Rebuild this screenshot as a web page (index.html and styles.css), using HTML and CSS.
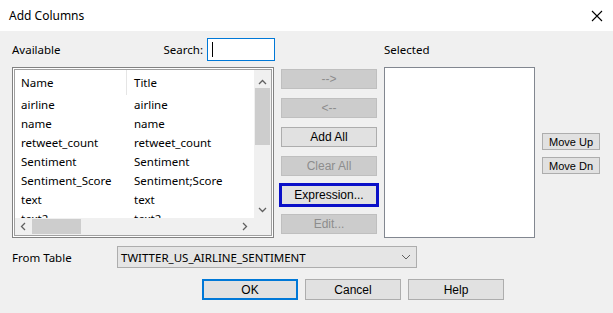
FILE: index.html
```html
<!DOCTYPE html>
<html lang="en">
<head>
  <meta charset="UTF-8">
  <title>Add Columns</title>
  <link rel="stylesheet" href="styles.css">
</head>
<body>
  <div class="dialog">
    <!-- Title Bar -->
    <div class="titlebar">
      <span class="title">Add Columns</span>
      <svg class="close" width="12" height="12" viewBox="0 0 12 12">
        <path d="M1 1 L11 11 M11 1 L1 11" stroke="#000" stroke-width="1.1" fill="none"/>
      </svg>
    </div>

    <div class="content">
      <div class="row labels">
        <div class="available-head">
          <span class="label">Available</span>
          <div class="search">
            <span class="label">Search:</span>
            <div class="search-box"><span class="caret"></span></div>
          </div>
        </div>
        <span class="label selected-label">Selected</span>
      </div>

      <div class="row lists">
        <!-- Available columns -->
        <div class="listbox">
          <div class="listbox-inner">
            <div class="grid-view">
              <div class="grid-row header">
                <span class="cell name">Name</span>
                <span class="cell title-col">Title</span>
              </div>
              <div class="grid-row"><span class="cell name">airline</span><span class="cell title-col">airline</span></div>
              <div class="grid-row"><span class="cell name">name</span><span class="cell title-col">name</span></div>
              <div class="grid-row"><span class="cell name">retweet_count</span><span class="cell title-col">retweet_count</span></div>
              <div class="grid-row"><span class="cell name">Sentiment</span><span class="cell title-col">Sentiment</span></div>
              <div class="grid-row"><span class="cell name">Sentiment_Score</span><span class="cell title-col">Sentiment;Score</span></div>
              <div class="grid-row"><span class="cell name">text</span><span class="cell title-col">text</span></div>
              <div class="grid-row"><span class="cell name">text2</span><span class="cell title-col">text2</span></div>
            </div>
            <div class="vscroll">
              <svg width="9" height="6" viewBox="0 0 9 6"><path d="M1 5 L4.5 1.5 L8 5" stroke="#606060" stroke-width="1.3" fill="none"/></svg>
              <div class="vthumb"></div>
              <svg class="down" width="9" height="6" viewBox="0 0 9 6"><path d="M1 1 L4.5 4.5 L8 1" stroke="#606060" stroke-width="1.3" fill="none"/></svg>
            </div>
            <div class="hscroll">
              <svg width="6" height="9" viewBox="0 0 6 9"><path d="M5 1 L1.5 4.5 L5 8" stroke="#606060" stroke-width="1.3" fill="none"/></svg>
              <div class="hthumb"></div>
              <svg class="right" width="6" height="9" viewBox="0 0 6 9"><path d="M1 1 L4.5 4.5 L1 8" stroke="#606060" stroke-width="1.3" fill="none"/></svg>
            </div>
            <div class="corner"></div>
          </div>
        </div>

        <!-- Transfer buttons -->
        <div class="transfer">
          <button class="btn disabled">--&gt;</button>
          <button class="btn disabled">&lt;--</button>
          <button class="btn">Add All</button>
          <button class="btn disabled">Clear All</button>
          <button class="btn focused">Expression...</button>
          <button class="btn disabled">Edit...</button>
        </div>

        <!-- Selected columns -->
        <div class="selected-box"></div>

        <div class="order">
          <button class="btn small">Move Up</button>
          <button class="btn small">Move Dn</button>
        </div>
      </div>

      <div class="row from">
        <span class="label from-label">From Table</span>
        <div class="combo">
          <span class="combo-text">TWITTER_US_AIRLINE_SENTIMENT</span>
          <svg width="10" height="6" viewBox="0 0 10 6"><path d="M1 1 L5 5 L9 1" stroke="#606060" stroke-width="1" fill="none"/></svg>
        </div>
      </div>

      <div class="row actions">
        <button class="btn default">OK</button>
        <button class="btn">Cancel</button>
        <button class="btn">Help</button>
      </div>
    </div>
  </div>
</body>
</html>
```

FILE: styles.css
```css
* {
  margin: 0;
  padding: 0;
  box-sizing: border-box;
}

body {
  background: #f0f0f0;
  width: 613px;
  height: 313px;
  overflow: hidden;
  font-family: 'Noto Sans', 'Open Sans', sans-serif;
  font-size: 11.5px;
  color: #000;
}

.dialog {
  width: 613px;
  height: 313px;
}

/* Title Bar */
.titlebar {
  height: 31px;
  background: #ffffff;
  display: flex;
  align-items: center;
  justify-content: space-between;
  padding: 0 10px 0 9px;
}

.title {
  font-size: 12px;
}

.close {
  display: block;
}

.content {
  padding: 7px 0 0 12px;
}

.row {
  display: flex;
}

.label {
  white-space: nowrap;
}

/* Labels row */
.labels {
  height: 23px;
  align-items: center;
}

.available-head {
  width: 263px;
  display: flex;
  justify-content: space-between;
  align-items: center;
}

.search {
  display: flex;
  align-items: center;
  gap: 4px;
}

.search-box {
  width: 68px;
  height: 23px;
  background: #fff;
  border: 1px solid #0078d7;
  padding: 3px 0 0 4px;
}

.caret {
  display: block;
  width: 1px;
  height: 15px;
  background: #000;
}

.selected-label {
  margin-left: 109px;
}

/* Lists row */
.lists {
  margin-top: 6px;
  align-items: flex-start;
}

.listbox {
  width: 262px;
  height: 171px;
  border: 1px solid #828282;
  padding: 1px;
  background: #fff;
}

.listbox-inner {
  height: 100%;
  border: 1px solid #a0a0a0;
  display: grid;
  grid-template-columns: 1fr 17px;
  grid-template-rows: 1fr 17px;
  overflow: hidden;
}

.grid-view {
  overflow: hidden;
  background: #fff;
}

.grid-row {
  display: flex;
  height: 19px;
  align-items: center;
  white-space: nowrap;
}

.grid-row.header {
  height: 25px;
}

.cell.name {
  width: 112px;
  padding-left: 6px;
}

.cell.title-col {
  padding-left: 7px;
}

.header .cell.name {
  border-right: 1px solid #e5e5e5;
  height: 100%;
  display: flex;
  align-items: center;
}

.vscroll {
  background: #f0f0f0;
  display: flex;
  flex-direction: column;
  align-items: center;
  padding-top: 9px;
}

.vthumb {
  width: 15px;
  height: 57px;
  background: #cdcdcd;
  margin-top: 3px;
}

.vscroll .down {
  margin-top: auto;
  margin-bottom: 5px;
}

.hscroll {
  background: #f0f0f0;
  display: flex;
  align-items: center;
  padding-left: 5px;
}

.hthumb {
  width: 49px;
  height: 15px;
  background: #cdcdcd;
  margin-left: 6px;
}

.hscroll .right {
  margin-left: auto;
  margin-right: 6px;
}

.corner {
  background: #f0f0f0;
}

/* Buttons */
.btn {
  font-family: 'Liberation Sans', Arial, sans-serif;
  font-size: 12px;
  color: #000;
  background: #e1e1e1;
  border: 1px solid #adadad;
  height: 20px;
  width: 96px;
  display: flex;
  align-items: center;
  justify-content: center;
}

.btn.disabled {
  background: #cccccc;
  border-color: #bfbfbf;
  color: #8d8d8d;
}

.btn.focused {
  border-color: #0a10c8;
  box-shadow: 0 0 0 2px #0a10c8;
}

.transfer {
  margin-left: 7px;
  margin-top: 2px;
  display: flex;
  flex-direction: column;
  gap: 9px;
}

.selected-box {
  margin-left: 7px;
  width: 151px;
  height: 171px;
  background: #fff;
  border: 1px solid #828790;
}

.order {
  margin-left: 7px;
  margin-top: 66px;
  display: flex;
  flex-direction: column;
  gap: 7px;
}

.btn.small {
  width: 58px;
  height: 17px;
  font-size: 11px;
}

/* From table */
.from {
  margin-top: 8px;
  align-items: center;
}

.from-label {
  width: 105px;
}

.combo {
  width: 300px;
  height: 22px;
  background: #e5e5e5;
  border: 1px solid #adadad;
  display: flex;
  align-items: center;
  justify-content: space-between;
  padding: 0 5px 0 3px;
}

.combo-text {
  font-size: 11.5px;
}

/* Dialog actions */
.actions {
  margin-top: 11px;
  padding-left: 190px;
  gap: 7px;
}

.actions .btn {
  height: 21px;
}

.btn.default {
  border: 2px solid #0078d7;
}
```
